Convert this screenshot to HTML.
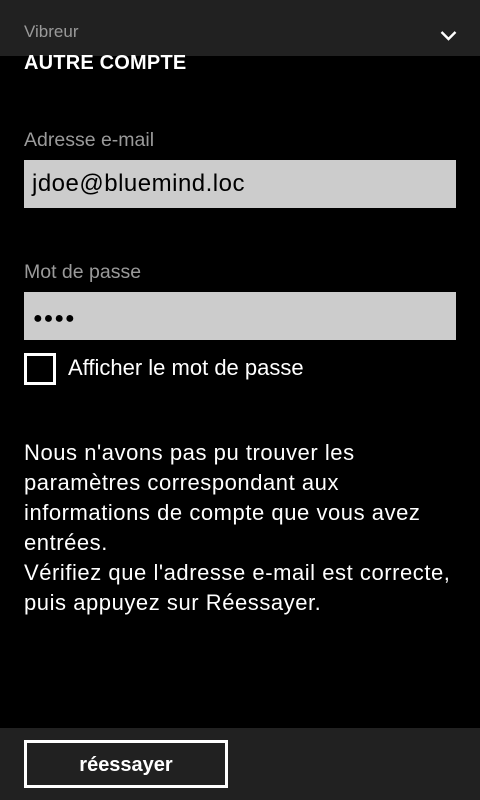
<!DOCTYPE html>
<html><head><meta charset="utf-8"><style>
body{margin:0;width:480px;height:800px;background:#000;font-family:"Liberation Sans",sans-serif;color:#fff;position:relative;overflow:hidden}
div{position:absolute}
.top{left:0;top:0;width:480px;height:56px;background:#212121}
.lbl{color:#9a9a9a;font-size:19.5px}
.inp{left:24px;width:432px;height:48px;background:#ccc;color:#000;font-size:24px;line-height:48px;letter-spacing:0.5px}
</style></head><body>
<div class="top"></div>
<div style="left:24px;top:22px;font-size:17px;color:#9a9a9a">Vibreur</div>
<svg style="position:absolute;left:440px;top:30px" width="17" height="12"><path d="M1.5 2 L8.5 9 L15.5 2" stroke="#fff" stroke-width="2.4" fill="none"/></svg>
<div style="left:24px;top:52px;font-size:20px;font-weight:bold;letter-spacing:0.2px">AUTRE COMPTE</div>
<div class="lbl" style="left:24px;top:129px">Adresse e-mail</div>
<div class="inp" style="top:160px"><span style="margin-left:8px">jdoe@bluemind.loc</span></div>
<div class="lbl" style="left:24px;top:261px">Mot de passe</div>
<div class="inp" style="top:292px"><span style="margin-left:9px;font-size:16px;letter-spacing:1px">●●●●</span></div>
<div style="left:24px;top:353px;width:26px;height:26px;border:3px solid #fff"></div>
<div style="left:68px;top:355px;font-size:22px">Afficher le mot de passe</div>
<div style="left:24px;top:438px;width:456px;font-size:22px;letter-spacing:0.55px;line-height:30px;white-space:nowrap">Nous n'avons pas pu trouver les<br>paramètres correspondant aux<br>informations de compte que vous avez<br>entrées.<br>Vérifiez que l'adresse e-mail est correcte,<br>puis appuyez sur Réessayer.</div>
<div style="left:0;top:728px;width:480px;height:72px;background:#212121"></div>
<div style="left:24px;top:740px;width:198px;height:42px;border:3px solid #fff;text-align:center;line-height:44px;font-size:20px;font-weight:bold">réessayer</div>
</body></html>
